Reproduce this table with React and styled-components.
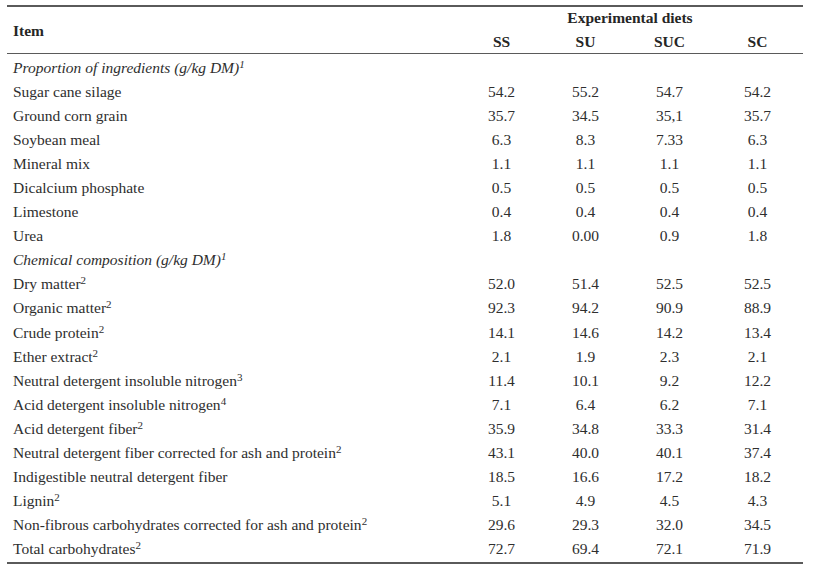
import React from "react";
import styled, { createGlobalStyle } from "styled-components";

const Global = createGlobalStyle`
  html, body { margin: 0; padding: 0; background: #fff; }
  body { font-family: "Liberation Serif", "Times New Roman", serif; color: #2e2e2e; }
`;

const COLS = "452px 85px 83px 85px 91px";

const Page = styled.div`
  padding: 5px 0 0 7px;
  width: 796px;
`;

const Table = styled.div`
  border-top: 2px solid #5a5a5a;
  border-bottom: 2px solid #5a5a5a;
  font-size: 15.5px;
`;

const Head = styled.div`
  display: grid;
  grid-template-columns: ${COLS};
  grid-template-rows: 24px 22px;
  border-bottom: 1.5px solid #5a5a5a;
  font-weight: bold;
  color: #262626;
`;

const ItemHead = styled.div`
  grid-row: 1 / span 2;
  grid-column: 1;
  display: flex;
  align-items: center;
  padding-left: 6px;
  padding-top: 1px;
`;

const GroupHead = styled.div`
  grid-row: 1;
  grid-column: 2 / span 4;
  text-align: center;
  padding-right: 2px;
  padding-top: 2px;
`;

const ColHead = styled.div`
  grid-row: 2;
  grid-column: ${(p) => p.$col};
  text-align: center;
  padding-top: 2px;
`;

const Body = styled.div`
  padding: 2px 0 1px;
`;

const Row = styled.div`
  display: grid;
  grid-template-columns: ${COLS};
  height: 24.05px;
  align-items: center;
`;

const Label = styled.div`
  padding-left: 6px;
  white-space: nowrap;
  font-style: ${(p) => (p.$section ? "italic" : "normal")};
`;

const Cell = styled.div`
  text-align: center;
`;

const Sup = styled.sup`
  font-size: 11px;
  line-height: 0;
  vertical-align: 5px;
`;

const rows = [
  { section: true, label: "Proportion of ingredients (g/kg DM)", sup: "1" },
  { label: "Sugar cane silage", v: ["54.2", "55.2", "54.7", "54.2"] },
  { label: "Ground corn grain", v: ["35.7", "34.5", "35,1", "35.7"] },
  { label: "Soybean meal", v: ["6.3", "8.3", "7.33", "6.3"] },
  { label: "Mineral mix", v: ["1.1", "1.1", "1.1", "1.1"] },
  { label: "Dicalcium phosphate", v: ["0.5", "0.5", "0.5", "0.5"] },
  { label: "Limestone", v: ["0.4", "0.4", "0.4", "0.4"] },
  { label: "Urea", v: ["1.8", "0.00", "0.9", "1.8"] },
  { section: true, label: "Chemical composition (g/kg DM)", sup: "1" },
  { label: "Dry matter", sup: "2", v: ["52.0", "51.4", "52.5", "52.5"] },
  { label: "Organic matter", sup: "2", v: ["92.3", "94.2", "90.9", "88.9"] },
  { label: "Crude protein", sup: "2", v: ["14.1", "14.6", "14.2", "13.4"] },
  { label: "Ether extract", sup: "2", v: ["2.1", "1.9", "2.3", "2.1"] },
  { label: "Neutral detergent insoluble nitrogen", sup: "3", v: ["11.4", "10.1", "9.2", "12.2"] },
  { label: "Acid detergent insoluble nitrogen", sup: "4", v: ["7.1", "6.4", "6.2", "7.1"] },
  { label: "Acid detergent fiber", sup: "2", v: ["35.9", "34.8", "33.3", "31.4"] },
  { label: "Neutral detergent fiber corrected for ash and protein", sup: "2", v: ["43.1", "40.0", "40.1", "37.4"] },
  { label: "Indigestible neutral detergent fiber", v: ["18.5", "16.6", "17.2", "18.2"] },
  { label: "Lignin", sup: "2", v: ["5.1", "4.9", "4.5", "4.3"] },
  { label: "Non-fibrous carbohydrates corrected for ash and protein", sup: "2", v: ["29.6", "29.3", "32.0", "34.5"] },
  { label: "Total carbohydrates", sup: "2", v: ["72.7", "69.4", "72.1", "71.9"] },
];

const diets = ["SS", "SU", "SUC", "SC"];

export default function App() {
  return (
    <Page>
      <Global />
      <Table>
        <Head>
          <ItemHead>Item</ItemHead>
          <GroupHead>Experimental diets</GroupHead>
          {diets.map((d, i) => (
            <ColHead key={d} $col={i + 2}>
              {d}
            </ColHead>
          ))}
        </Head>
        <Body>
          {rows.map((r, i) => (
            <Row key={i}>
              <Label $section={r.section}>
                {r.label}
                {r.sup && <Sup>{r.sup}</Sup>}
              </Label>
              {(r.v || ["", "", "", ""]).map((x, j) => (
                <Cell key={j}>{x}</Cell>
              ))}
            </Row>
          ))}
        </Body>
      </Table>
    </Page>
  );
}
